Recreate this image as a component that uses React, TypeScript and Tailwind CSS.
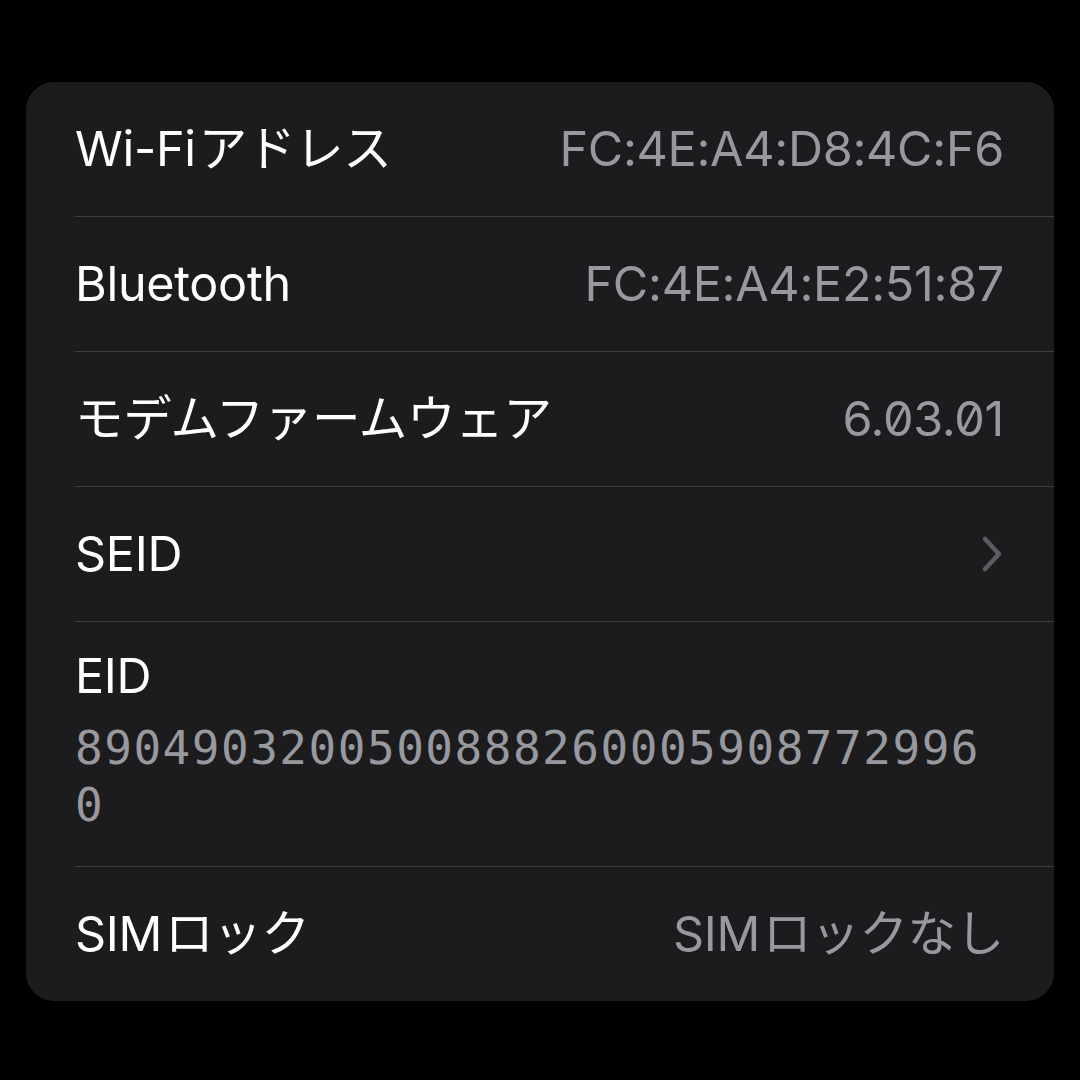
import { ReactNode } from "react";

const gap = <span className="inline-block w-[3px]" />;

const rows: { key: string; label: ReactNode; value?: string; chevron?: boolean }[] = [
  { key: "wifi", label: <>Wi-Fi{gap}アドレス</>, value: "FC:4E:A4:D8:4C:F6" },
  { key: "bt", label: "Bluetooth", value: "FC:4E:A4:E2:51:87" },
  { key: "modem", label: "モデムファームウェア", value: "6.03.01" },
  { key: "seid", label: "SEID", chevron: true },
];

function Row({ children, last }: { children: ReactNode; last?: boolean }) {
  return (
    <div className={last ? "" : "border-b border-[#3d3d41]"}>
      <div className="h-[134px] flex items-center justify-between pr-[50px]">{children}</div>
    </div>
  );
}

export default function App() {
  return (
    <div
      className="w-[1080px] h-[1080px] bg-black pt-[82px] px-[26px] text-[48.5px] tracking-[-0.3px]"
      style={{ fontFamily: 'Inter, "Noto Sans CJK JP", sans-serif' }}
    >
      <div className="bg-[#1c1c1e] rounded-[28px] pl-[49px] overflow-hidden">
        {rows.map((r) => (
          <Row key={r.key}>
            <span className="text-white">{r.label}</span>
            {r.value && <span className="text-[#98989f] slashed-zero">{r.value}</span>}
            {r.chevron && (
              <svg width="22" height="38" viewBox="0 0 22 38" className="mr-[1px]">
                <polyline
                  points="4,4 18,19 4,34"
                  fill="none"
                  stroke="#5c5c61"
                  strokeWidth="4.5"
                  strokeLinecap="round"
                  strokeLinejoin="round"
                />
              </svg>
            )}
          </Row>
        ))}

        {/* EID */}
        <div className="border-b border-[#3d3d41] h-[245px] pt-[26px] pr-[50px]">
          <div className="text-white leading-[56px]">EID</div>
          <div
            className="text-[#98989f] text-[46px] leading-[57px] tracking-[1.5px] break-all slashed-zero mt-[16px]"
            style={{ fontFamily: '"DejaVu Sans Mono", monospace' }}
          >
            89049032005008882600059087729960
          </div>
        </div>

        <Row last>
          <span className="text-white">SIM{gap}ロック</span>
          <span className="text-[#98989f]">SIM{gap}ロックなし</span>
        </Row>
      </div>
    </div>
  );
}
